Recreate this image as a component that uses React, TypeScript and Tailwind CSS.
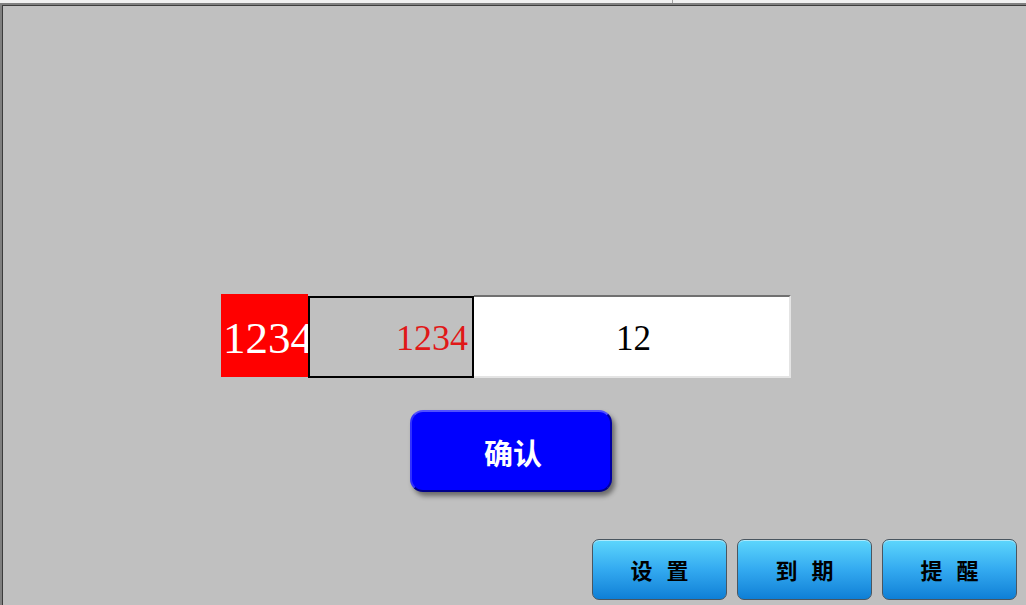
import React from "react";

const serif = { fontFamily: '"Liberation Serif", "Noto Sans CJK SC", serif' };

const bottomButtons = [
    ["设", "置"],
    ["到", "期"],
    ["提", "醒"],
];

function NavButton({ chars }: { chars: string[] }) {
    return (
        <button className="w-[135px] h-[61px] rounded-[7px] border border-[#4a5660] bg-gradient-to-b from-[#5dd6fc] via-[#33aaf0] to-[#0e7fd6] shadow-[inset_0_1px_0_rgba(255,255,255,0.5)] flex items-center justify-center gap-[14px] text-[22px] font-bold text-black font-['Noto_Sans_CJK_SC',sans-serif]">
            <span>{chars[0]}</span>
            <span>{chars[1]}</span>
        </button>
    );
}

export default function App() {
    return (
        <div className="w-[1026px] h-[605px] overflow-hidden bg-[#f0f0f0] flex flex-col">
            {/* window strip on top */}
            <div className="h-[3px] flex">
                <div className="w-[672px]" />
                <div className="w-px bg-[#a0a0a0]" />
            </div>

            <div className="flex-1 border-t-2 border-l-2 border-[#808080]">
                <div className="h-full border-t border-l border-[#3c3c3c] bg-[#c0c0c0] flex flex-col">
                    {/* value row */}
                    <div className="mt-[288px] ml-[218px] flex items-start">
                        <div className="w-[87px] h-[83px] bg-[#ff0000] overflow-hidden flex items-center pl-[2px] pt-[6px]">
                            <span style={serif} className="text-[45px] leading-none text-white whitespace-nowrap">1234</span>
                        </div>
                        <div className="mt-[2px] w-[166px] h-[82px] border-2 border-black bg-[#c0c0c0] flex items-center justify-end pr-[4px] pt-[2px]">
                            <span style={serif} className="text-[36px] leading-none text-[#e01818]">1234</span>
                        </div>
                        <div className="mt-[1px] w-[317px] h-[83px] bg-white border-t-2 border-t-[#707070] border-r-2 border-b-2 border-r-[#e4e4e4] border-b-[#e4e4e4] flex items-center justify-center pt-[4px] pl-[4px]">
                            <span style={serif} className="text-[35px] leading-none text-black">12</span>
                        </div>
                    </div>

                    {/* confirm */}
                    <div className="mt-[32px] ml-[407px]">
                        <button className="w-[202px] h-[82px] rounded-[13px] bg-[#0000ff] border-2 border-t-[#5050ff] border-l-[#3030ff] border-r-[#0000a0] border-b-[#00008a] shadow-[3px_4px_5px_rgba(0,0,0,0.45)] text-white text-[29px] font-bold font-['Noto_Sans_CJK_SC',sans-serif] flex items-center justify-center pt-[3px] pl-[4px]">
                            确认
                        </button>
                    </div>

                    {/* bottom nav */}
                    <div className="mt-[47px] ml-[589px] flex gap-[10px]">
                        {bottomButtons.map((c, i) => (
                            <NavButton key={i} chars={c} />
                        ))}
                    </div>
                </div>
            </div>
        </div>
    );
}
